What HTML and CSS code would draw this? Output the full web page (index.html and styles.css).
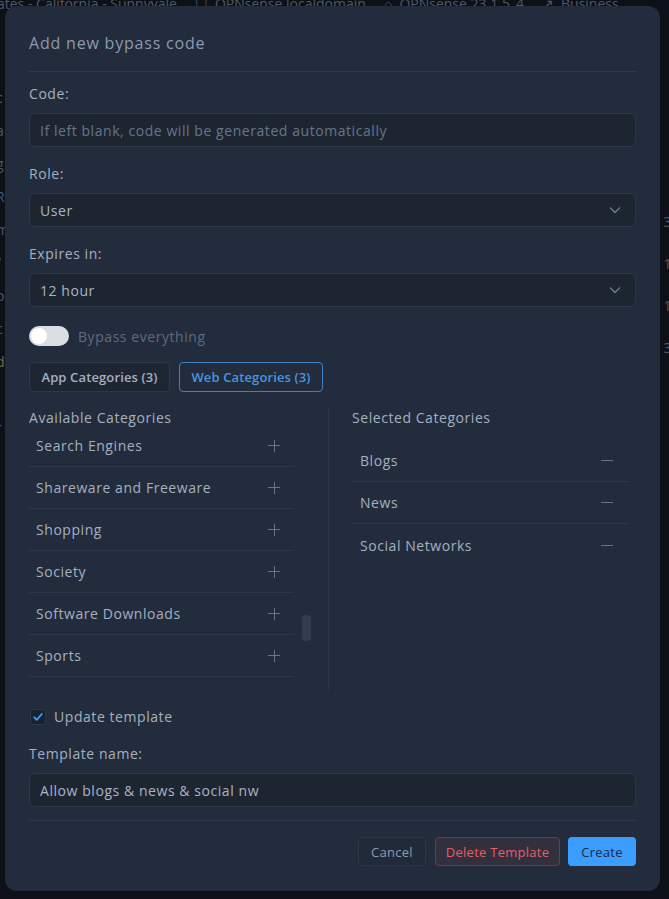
FILE: index.html
```html
<!DOCTYPE html>
<html lang="en">
<head>
    <meta charset="UTF-8">
    <meta name="viewport" content="width=device-width, initial-scale=1.0">
    <title>Add new bypass code</title>
    <link rel="stylesheet" href="styles.css">
</head>
<body>
    <!-- Page behind the modal -->
    <div class="page">
        <div class="page-header">
            <span>tates - California - Sunnyvale</span>
            <span class="meta"><span class="meta-icon">&#9744;</span>OPNsense.localdomain</span>
            <span class="meta"><span class="meta-icon">&#8962;</span>OPNsense 23.1.5_4</span>
            <span class="meta"><span class="meta-icon">&#8599;</span>Business</span>
        </div>
        <div class="page-edge left">
            <span style="margin-top: 94px">c</span>
            <span>a</span>
            <span>g</span>
            <span class="blue">R</span>
            <span>m</span>
            <span>/</span>
            <span>o</span>
            <span>c</span>
            <span class="amber">d</span>
            <span></span>
            <span class="blue">r</span>
        </div>
        <div class="page-edge right">
            <span style="margin-top: 218px">3</span>
            <span>1</span>
            <span>1</span>
            <span>3</span>
        </div>
    </div>

    <div class="overlay">
        <div class="modal">
            <div class="modal-header">Add new bypass code</div>

            <div class="modal-body">
                <label class="field-label">Code:</label>
                <div class="input placeholder">If left blank, code will be generated automatically</div>

                <label class="field-label">Role:</label>
                <div class="input select">
                    <span>User</span>
                    <svg class="chevron" width="12" height="8" viewBox="0 0 12 8"><path d="M1 1.5 6 6.5 11 1.5" fill="none" stroke="currentColor" stroke-width="1.4"/></svg>
                </div>

                <label class="field-label">Expires in:</label>
                <div class="input select">
                    <span>12 hour</span>
                    <svg class="chevron" width="12" height="8" viewBox="0 0 12 8"><path d="M1 1.5 6 6.5 11 1.5" fill="none" stroke="currentColor" stroke-width="1.4"/></svg>
                </div>

                <div class="toggle-row">
                    <span class="toggle"><span class="knob"></span></span>
                    <span class="toggle-label">Bypass everything</span>
                </div>

                <div class="tabs">
                    <button class="tab">App Categories (3)</button>
                    <button class="tab active">Web Categories (3)</button>
                </div>

                <div class="categories">
                    <div class="cat-col available">
                        <div class="cat-title">Available Categories</div>
                        <div class="scroll-wrap">
                            <div class="scroll-view">
                                <ul class="cat-list shifted">
                                    <li>Search Engines <span class="plus"></span></li>
                                    <li>Shareware and Freeware <span class="plus"></span></li>
                                    <li>Shopping <span class="plus"></span></li>
                                    <li>Society <span class="plus"></span></li>
                                    <li>Software Downloads <span class="plus"></span></li>
                                    <li>Sports <span class="plus"></span></li>
                                    <li>Spyware <span class="plus"></span></li>
                                </ul>
                            </div>
                            <div class="scroll-track"><span class="scroll-thumb"></span></div>
                        </div>
                    </div>
                    <div class="cat-col selected">
                        <div class="cat-title">Selected Categories</div>
                        <ul class="cat-list">
                            <li>Blogs <span class="minus"></span></li>
                            <li>News <span class="minus"></span></li>
                            <li>Social Networks <span class="minus"></span></li>
                        </ul>
                    </div>
                </div>

                <div class="check-row">
                    <span class="checkbox">
                        <svg width="12" height="12" viewBox="0 0 12 12"><path d="M2.2 6.3 4.8 8.8 9.8 3" fill="none" stroke="currentColor" stroke-width="1.8" stroke-linecap="round" stroke-linejoin="round"/></svg>
                    </span>
                    <span class="check-label">Update template</span>
                </div>

                <label class="field-label">Template name:</label>
                <div class="input">Allow blogs &amp; news &amp; social nw</div>
            </div>

            <div class="modal-footer">
                <button class="btn btn-cancel">Cancel</button>
                <button class="btn btn-delete">Delete Template</button>
                <button class="btn btn-create">Create</button>
            </div>
        </div>
    </div>
</body>
</html>
```

FILE: styles.css
```css
* {
    margin: 0;
    padding: 0;
    box-sizing: border-box;
}

body {
    background: #0d1117;
    font-family: "Open Sans", "Noto Sans", sans-serif;
    letter-spacing: 0.035em;
    color: #a5b0c0;
    height: 899px;
    overflow: hidden;
}

/* background page */
.page {
    height: 100%;
    position: relative;
}

.page-header {
    display: flex;
    gap: 18px;
    margin-top: -6px;
    margin-left: -8px;
    font-size: 14px;
    line-height: 20px;
    letter-spacing: 0;
    color: #4f5868;
    white-space: nowrap;
}

.meta-icon {
    margin-right: 7px;
}

.page-edge {
    position: absolute;
    top: 0;
    display: flex;
    flex-direction: column;
    font-size: 14px;
    line-height: 20px;
    color: #4f5868;
}

.page-edge span {
    height: 33px;
}

.page-edge.left {
    left: -4px;
}

.page-edge.right {
    right: -3px;
}

.page-edge.right span {
    height: 42px;
}

.page-edge .blue {
    color: #3c5a86;
}

.page-edge .amber {
    color: #7a6a3c;
}

/* modal */
.overlay {
    position: fixed;
    inset: 0;
    padding: 6px 9px 0 5px;
}

.modal {
    background: #222c3c;
    border-radius: 12px;
    height: 885px;
    padding: 25px 24px 25px;
    display: flex;
    flex-direction: column;
}

.modal-header {
    font-size: 16px;
    line-height: 24px;
    letter-spacing: 0.05em;
    color: #8c9ab0;
    padding-bottom: 16px;
    border-bottom: 1px solid #2e394b;
}

.modal-body {
    display: flex;
    flex-direction: column;
    padding-bottom: 13px;
    border-bottom: 1px solid #2e394b;
}

.field-label {
    display: block;
    font-size: 14px;
    line-height: 20px;
    margin-top: 17px;
    margin-bottom: 9px;
    color: #a5b0c0;
}

.modal-body > .field-label:first-child {
    margin-top: 12px;
}

.input {
    height: 34px;
    background: #1d2531;
    border: 1px solid #2c3748;
    border-radius: 6px;
    padding: 0 10px;
    display: flex;
    align-items: center;
    font-size: 14px;
    color: #a9b4c4;
}

.input.placeholder {
    color: #66758b;
}

.input.select {
    justify-content: space-between;
    padding-right: 14px;
}

.chevron {
    color: #6b7a90;
}

.toggle-row {
    display: flex;
    align-items: center;
    gap: 9px;
    margin-top: 19px;
}

.toggle {
    width: 40px;
    height: 20px;
    border-radius: 10px;
    background: #dcdde3;
    display: flex;
    align-items: center;
    padding: 2px;
}

.knob {
    width: 16px;
    height: 16px;
    border-radius: 50%;
    background: #ffffff;
}

.toggle-label {
    font-size: 14px;
    color: #5d6b80;
}

.tabs {
    display: flex;
    gap: 9px;
    margin-top: 16px;
}

.tab {
    height: 30px;
    width: 141px;
    font-family: inherit;
    font-size: 13px;
    font-weight: 600;
    letter-spacing: 0.01em;
    color: #a5b0c0;
    background: #1e2633;
    border: 1px solid #2c3748;
    border-radius: 4px;
}

.tab.active {
    width: 144px;
    color: #4a94e0;
    background: transparent;
    border-color: #3b82c4;
}

/* categories */
.categories {
    display: flex;
    margin-top: 16px;
}

.cat-col {
    flex: 1;
}

.cat-col.available {
    flex: 0 0 300px;
    border-right: 1px solid #2c3748;
    padding-bottom: 10px;
}

.cat-col.selected {
    padding-left: 23px;
    padding-right: 7px;
}

.cat-title {
    font-size: 14px;
    line-height: 20px;
    margin-bottom: 12px;
    color: #a5b0c0;
}

.scroll-wrap {
    display: flex;
}

.scroll-view {
    width: 265px;
    height: 240px;
    overflow: hidden;
}

.scroll-track {
    padding: 175px 0 0 8px;
}

.scroll-thumb {
    display: block;
    width: 9px;
    height: 26px;
    border-radius: 4px;
    background: #323d4f;
}

.cat-list {
    list-style: none;
}

.cat-list.shifted {
    margin-top: -15px;
}

.cat-list li {
    height: 42px;
    display: flex;
    align-items: center;
    justify-content: space-between;
    padding: 0 14px 0 7px;
    font-size: 14px;
    color: #a5b0c0;
    border-bottom: 1px solid #2c3748;
}

.selected .cat-list li {
    padding: 0 16px 0 8px;
}

.selected .cat-list li:last-child {
    border-bottom: none;
}

.plus,
.minus {
    position: relative;
    width: 12px;
    height: 12px;
}

.plus::before,
.plus::after,
.minus::before {
    content: "";
    position: absolute;
    background: #66758b;
}

.plus::before,
.minus::before {
    left: 0;
    right: 0;
    top: 5.5px;
    height: 1px;
}

.plus::after {
    top: 0;
    bottom: 0;
    left: 5.5px;
    width: 1px;
}

/* template */
.check-row {
    display: flex;
    align-items: center;
    gap: 8px;
    margin-top: 19px;
    margin-left: 1px;
}

.checkbox {
    width: 16px;
    height: 16px;
    border: 1px solid #2c3748;
    border-radius: 3px;
    background: #1a2230;
    display: flex;
    align-items: center;
    justify-content: center;
    color: #3b9dff;
}

.check-label {
    font-size: 14px;
    line-height: 16px;
    color: #a5b0c0;
}

.check-row + .field-label {
    margin-top: 19px;
}

/* footer */
.modal-footer {
    display: flex;
    justify-content: flex-end;
    gap: 8px;
    margin-top: 16px;
}

.btn {
    height: 29px;
    padding: 0;
    font-family: inherit;
    font-size: 13px;
    font-weight: 500;
    letter-spacing: 0.02em;
    white-space: nowrap;
    border-radius: 4px;
    border: 1px solid transparent;
}

.btn-cancel {
    width: 68px;
    margin-right: 1px;
    color: #8c9ab0;
    background: #212a38;
    border-color: #2c3748;
}

.btn-delete {
    width: 125px;
    color: #e55d68;
    background: #33303d;
    border-color: #6e3b46;
}

.btn-create {
    width: 68px;
    color: #1e2a3a;
    background: #3b9dff;
}
```
